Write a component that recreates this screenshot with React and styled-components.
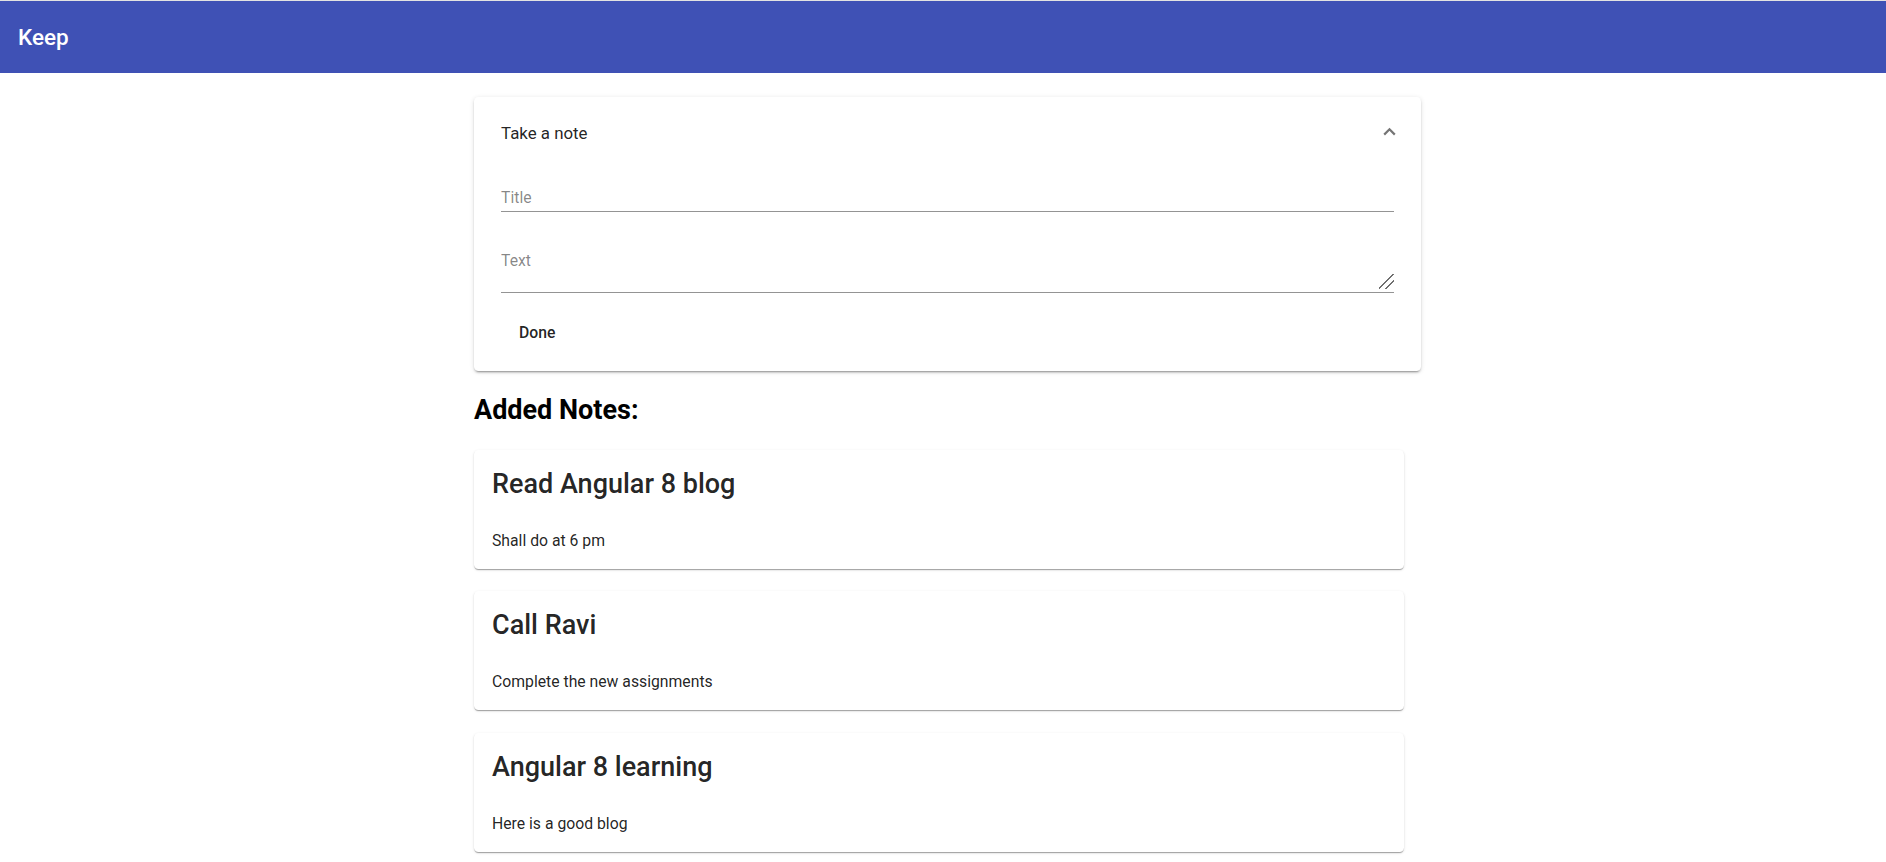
import React from "react";
import styled, { createGlobalStyle } from "styled-components";

const GlobalStyle = createGlobalStyle`
  body {
    margin: 0;
    background: #fff;
    font-family: Roboto, "Helvetica Neue", sans-serif;
    color: rgba(0, 0, 0, 0.87);
  }
`;

// top bar
const Toolbar = styled.header`
  box-sizing: border-box;
  height: 73px;
  border-top: 1px solid #e2e2e2;
  background: #3f51b5;
  display: flex;
  align-items: center;
  padding: 0 18px;
`;

const Brand = styled.span`
  font-size: 22.5px;
  font-weight: 500;
  color: #fff;
`;

const Main = styled.main`
  width: 947px;
  margin: 24px 0 0 calc(50% - 469px);
`;

// expansion panel
const Panel = styled.section`
  background: #fff;
  border-radius: 4.5px;
  box-shadow: 0 3px 1px -2px rgba(0, 0, 0, 0.2), 0 2px 2px 0 rgba(0, 0, 0, 0.14),
    0 1px 5px 0 rgba(0, 0, 0, 0.12);
`;

const PanelHeader = styled.div`
  height: 72px;
  padding: 0 25px 0 27px;
  display: flex;
  align-items: center;
  justify-content: space-between;
`;

const PanelTitle = styled.span`
  font-size: 16.875px;
  color: rgba(0, 0, 0, 0.87);
`;

const Chevron = styled.svg`
  width: 13px;
  height: 9px;
  color: rgba(0, 0, 0, 0.54);
  margin-top: -4px;
`;

const PanelBody = styled.div`
  padding: 0 27px 18px;
`;

const Field = styled.div`
  padding-top: ${(p) => p.$top}px;
  padding-bottom: ${(p) => p.$bottom}px;
  border-bottom: 1px solid rgba(0, 0, 0, 0.42);
`;

const Input = styled.input`
  display: block;
  width: 100%;
  height: 18.5px;
  padding: 0;
  margin: 0;
  border: 0;
  outline: none;
  background: transparent;
  font: inherit;
  font-size: 15.75px;
  line-height: 18.5px;
  color: rgba(0, 0, 0, 0.87);

  &::placeholder {
    color: rgba(0, 0, 0, 0.48);
  }
`;

const TextArea = styled.textarea`
  display: block;
  box-sizing: border-box;
  width: 100%;
  height: 37px;
  padding: 0;
  margin: 0;
  border: 0;
  outline: none;
  resize: vertical;
  background: transparent;
  font-family: inherit;
  font-size: 15.75px;
  line-height: 18.5px;
  color: rgba(0, 0, 0, 0.87);

  &::placeholder {
    color: rgba(0, 0, 0, 0.48);
  }

  &::-webkit-resizer {
    background: linear-gradient(
      135deg,
      transparent 0 46%,
      #6f6f6f 46% 53%,
      transparent 53% 68%,
      #6f6f6f 68% 75%,
      transparent 75%
    );
  }
`;

const Button = styled.button`
  display: block;
  height: 40.5px;
  margin-top: 20px;
  padding: 0 18px;
  border: 0;
  border-radius: 4.5px;
  background: transparent;
  font-family: inherit;
  font-size: 15.75px;
  font-weight: 500;
  line-height: 40.5px;
  color: rgba(0, 0, 0, 0.87);
  cursor: pointer;
`;

const Heading = styled.h2`
  margin: 23px 0 23.5px;
  font-size: 27px;
  font-weight: 700;
  color: #000;
`;

const NoteCard = styled.article`
  width: 930px;
  box-sizing: border-box;
  padding: 18px;
  margin-bottom: 22.5px;
  background: #fff;
  border-radius: 4.5px;
  box-shadow: 0 2px 1px -1px rgba(0, 0, 0, 0.2), 0 1px 1px 0 rgba(0, 0, 0, 0.14),
    0 1px 3px 0 rgba(0, 0, 0, 0.12);
`;

const NoteTitle = styled.div`
  font-size: 27px;
  font-weight: 500;
  line-height: 33px;
  margin-bottom: 30px;
  color: rgba(0, 0, 0, 0.87);
`;

const NoteText = styled.div`
  font-size: 15.75px;
  line-height: 20px;
  color: rgba(0, 0, 0, 0.87);
`;

const notes = [
  { title: "Read Angular 8 blog", text: "Shall do at 6 pm" },
  { title: "Call Ravi", text: "Complete the new assignments" },
  { title: "Angular 8 learning", text: "Here is a good blog" },
];

export default function App() {
  return (
    <>
      <GlobalStyle />
      <Toolbar>
        <Brand>Keep</Brand>
      </Toolbar>
      <Main>
        <Panel>
          <PanelHeader>
            <PanelTitle>Take a note</PanelTitle>
            <Chevron viewBox="0 0 13 9">
              <polyline
                points="1.2,7.6 6.5,2.3 11.8,7.6"
                fill="none"
                stroke="currentColor"
                strokeWidth="2.2"
              />
            </Chevron>
          </PanelHeader>
          <PanelBody>
            <Field $top={19.5} $bottom={4}>
              <Input placeholder="Title" />
            </Field>
            <Field $top={40} $bottom={2.5}>
              <TextArea placeholder="Text" />
            </Field>
            <Button>Done</Button>
          </PanelBody>
        </Panel>
        <Heading>Added Notes:</Heading>
        {notes.map((n) => (
          <NoteCard key={n.title}>
            <NoteTitle>{n.title}</NoteTitle>
            <NoteText>{n.text}</NoteText>
          </NoteCard>
        ))}
      </Main>
    </>
  );
}
